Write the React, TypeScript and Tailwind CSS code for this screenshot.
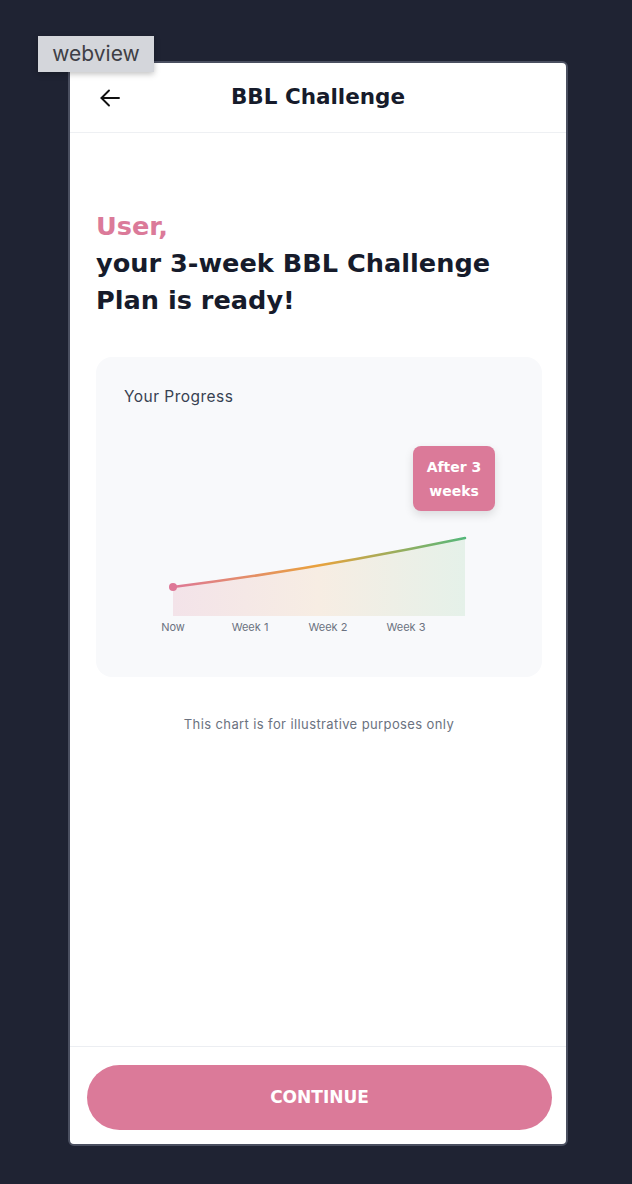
import React from 'react';

const BODY = "font-['Inter','Noto_Sans',sans-serif]";
const HEAD = "font-['DejaVu_Sans','Noto_Sans',sans-serif]";

const BackArrow = () => (
  <svg width="20" height="18" viewBox="0 0 20 18" fill="none" stroke="#111" strokeWidth="1.9" strokeLinecap="round" strokeLinejoin="round">
    <path d="M19 9H1.5" />
    <path d="M9 1.5L1.5 9L9 16.5" />
  </svg>
);

// chart coords are relative to the card's inner box (x from 124, y from 406)
const ProgressChart = () => {
  const labels = [
    { x: 49, t: 'Now' },
    { x: 126, t: 'Week 1' },
    { x: 204, t: 'Week 2' },
    { x: 282, t: 'Week 3' },
  ];
  return (
    <div className="relative h-[234px] w-full">
      <svg width="389" height="234" viewBox="0 0 389 234" className="absolute left-0 top-0">
        <defs>
          <linearGradient id="stroke" x1="49" y1="0" x2="341" y2="0" gradientUnits="userSpaceOnUse">
            <stop offset="0" stopColor="#de7897" />
            <stop offset="0.5" stopColor="#e9a23c" />
            <stop offset="1" stopColor="#55b77a" />
          </linearGradient>
          <linearGradient id="fill" x1="49" y1="0" x2="341" y2="0" gradientUnits="userSpaceOnUse">
            <stop offset="0" stopColor="#f3e3e9" />
            <stop offset="0.5" stopColor="#f7ede3" />
            <stop offset="1" stopColor="#e5f1e9" />
          </linearGradient>
        </defs>
        <path d="M49 180 Q186 163 341 131 L341 209 L49 209 Z" fill="url(#fill)" />
        <path d="M49 180 Q186 163 341 131" fill="none" stroke="url(#stroke)" strokeWidth="2.5" strokeLinecap="round" />
        <circle cx="49" cy="180" r="4" fill="#de7897" />
        {labels.map((l) => (
          <text
            key={l.t}
            x={l.x}
            y="224"
            textAnchor="middle"
            fontSize="11"
            fill="#6b7280"
            fontFamily="Inter, 'Noto Sans', sans-serif"
          >
            {l.t}
          </text>
        ))}
      </svg>
      <div className={`absolute left-[289px] top-[39px] flex h-[65px] w-[82px] flex-col items-center justify-center rounded-lg bg-[#db7a99] text-[14px] font-bold leading-6 text-white shadow-[0_4px_10px_rgba(0,0,0,0.12)] ${HEAD}`}>
        <span>After 3</span>
        <span>weeks</span>
      </div>
    </div>
  );
};

export default function App() {
  return (
    <div className={`relative h-[1184px] w-[632px] bg-[#1f2333] pl-[68px] pt-[61px] ${BODY}`}>
      <div className="absolute left-[38px] top-[36px] z-10 flex h-[36px] w-[116px] items-center justify-center bg-[#d4d6db] text-[21px] text-[#3f3f46] shadow-[0_2px_6px_rgba(0,0,0,0.25)]">
        webview
      </div>
      <div className="flex h-[1085px] w-[500px] flex-col overflow-hidden rounded-md border-2 border-[#4a4f60] bg-white">
        <header className="relative flex h-[70px] shrink-0 items-center justify-center border-b border-[#eef0f3]">
          <button className="absolute left-[30px] top-[26px]" aria-label="Back">
            <BackArrow />
          </button>
          <h1 className={`text-[21.5px] font-bold text-[#161b2b] ${HEAD}`}>BBL Challenge</h1>
        </header>

        <main className="flex-1 pl-[26px] pr-[24px] pt-[75px]">
          <h2 className={`text-[25.6px] font-bold leading-[37px] ${HEAD}`}>
            <span className="text-[#db7a99]">User,</span>
            <br />
            <span className="text-[#161b2b]">your 3-week BBL Challenge Plan is ready!</span>
          </h2>

          <div className="mt-[38px] h-[320px] rounded-2xl bg-[#f8f9fb] pl-7 pr-7 pt-[30px]">
            <p className="text-[15.5px] leading-5 tracking-[0.03em] text-[#374151]">Your Progress</p>
            <ProgressChart />
          </div>

          <p className="mt-[38px] text-center text-[13px] tracking-[0.03em] text-[#6b7280]">
            This chart is for illustrative purposes only
          </p>
        </main>

        <footer className="shrink-0 border-t border-[#eceef2] pb-[14px] pl-[17px] pr-[14px] pt-[18px]">
          <button className={`flex h-[65px] w-full items-center justify-center rounded-full bg-[#db7a99] text-[17px] font-bold text-white ${HEAD}`}>
            CONTINUE
          </button>
        </footer>
      </div>
    </div>
  );
}
